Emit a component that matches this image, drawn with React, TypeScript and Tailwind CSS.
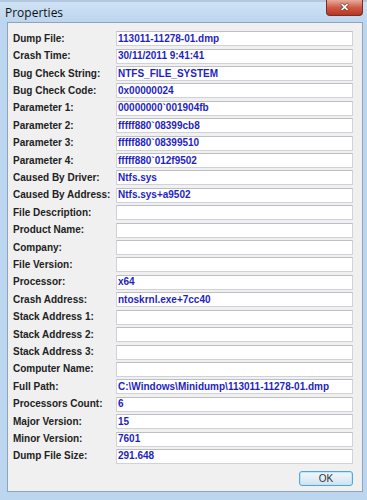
const rows: [string, string][] = [
  ['Dump File:', '113011-11278-01.dmp'],
  ['Crash Time:', '30/11/2011 9:41:41'],
  ['Bug Check String:', 'NTFS_FILE_SYSTEM'],
  ['Bug Check Code:', '0x00000024'],
  ['Parameter 1:', '00000000`001904fb'],
  ['Parameter 2:', 'fffff880`08399cb8'],
  ['Parameter 3:', 'fffff880`08399510'],
  ['Parameter 4:', 'fffff880`012f9502'],
  ['Caused By Driver:', 'Ntfs.sys'],
  ['Caused By Address:', 'Ntfs.sys+a9502'],
  ['File Description:', ''],
  ['Product Name:', ''],
  ['Company:', ''],
  ['File Version:', ''],
  ['Processor:', 'x64'],
  ['Crash Address:', 'ntoskrnl.exe+7cc40'],
  ['Stack Address 1:', ''],
  ['Stack Address 2:', ''],
  ['Stack Address 3:', ''],
  ['Computer Name:', ''],
  ['Full Path:', 'C:\\Windows\\Minidump\\113011-11278-01.dmp'],
  ['Processors Count:', '6'],
  ['Major Version:', '15'],
  ['Minor Version:', '7601'],
  ['Dump File Size:', '291.648'],
];

const App = () => {
  return (
    <div className="w-[367px] h-[500px] overflow-hidden bg-[#bdd6ef] flex flex-col font-['Liberation_Sans',Arial,sans-serif]">
      {/* TITLE BAR */}
      <div className="h-[22px] shrink-0 flex items-start justify-between bg-gradient-to-b from-[#cfe2f5] to-[#bcd6ef] border-t-2 border-[#b3c8dc]">
        <span className="pl-[5px] pt-[3px] text-[12px] leading-[16px] text-[#111] font-['Open_Sans',sans-serif]">
          Properties
        </span>
        <div className="mr-[4px] -mt-[2px] w-[37px] h-[16px] rounded-b-[4px] border border-[#7a2e22] border-t-0 bg-gradient-to-b from-[#e6ab9d] via-[#cf5a45] to-[#b8341f] flex items-center justify-center">
          <span className="text-white text-[11px] leading-none font-bold [text-shadow:0_0_1px_#3a1a14,0_0_1px_#3a1a14,0_0_1px_#3a1a14]">
            ✕
          </span>
        </div>
      </div>

      {/* CONTENT */}
      <div className="ml-[7px] mr-[4px] h-[470px] shrink-0 bg-[#f0f0f0] border border-[#8ea4bb] flex flex-col pt-[7px] pl-[5px] pr-[9px]">
        {rows.map(([label, value]) => (
          <div key={label} className="h-[17.42px] shrink-0 flex items-center">
            <span className="w-[103px] shrink-0 text-[10px] font-bold text-[#222] leading-none whitespace-nowrap">
              {label}
            </span>
            <div className="flex-1 h-[15px] bg-white border border-[#cfd2d6] border-t-[#bcc0c5] flex items-center pl-[1px]">
              <span className="text-[10px] font-bold text-[#1f1fc4] leading-none whitespace-nowrap">{value}</span>
            </div>
          </div>
        ))}

        <div className="flex justify-end mt-[6px]">
          <button className="w-[54px] h-[15px] rounded-[3px] border border-[#4ea6dc] bg-gradient-to-b from-[#eef6fc] via-[#e2eef7] to-[#cfe2f0] shadow-[inset_0_0_0_1px_#c4e5f6] text-[10px] leading-none text-[#333] font-['Liberation_Sans',sans-serif]">
            OK
          </button>
        </div>
      </div>

      <div className="flex-1" />
    </div>
  );
};

export default App;
